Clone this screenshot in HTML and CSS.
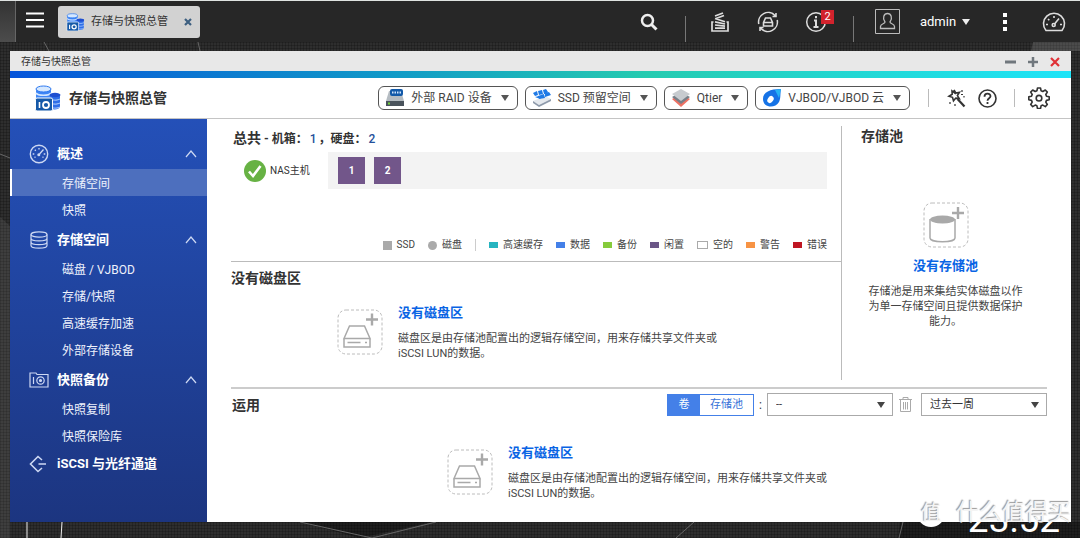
FILE: index.html
```html
<!DOCTYPE html>
<html lang="zh-CN">
<head>
<meta charset="utf-8">
<title>存储与快照总管</title>
<link rel="stylesheet" href="styles.css">
</head>
<body>
<svg class="defs" width="0" height="0" aria-hidden="true">
  <symbol id="app" viewBox="0 0 26 26">
    <path d="M1 4v10c0 2 14 2 15 0V4z" fill="#3f86f5"/>
    <ellipse cx="8.500" cy="4" rx="7.500" ry="3" fill="#d5e8ff" stroke="#2f7af0"/>
    <path d="M1 8c2 3 13 3 15 0" fill="none" stroke="#d5e8ff" stroke-width="1.500"/>
    <path d="M15 10v13c2 2 9 2 10-1V10z" fill="#2f6fe8"/>
    <ellipse cx="20" cy="10" rx="5.500" ry="2.200" fill="#1f4fd0"/>
    <path d="M16 14c3 2 7 1 9 0M16 18c3 2 7 1 9 0M16 22c3 2 7 1 9 0" fill="none" stroke="#b9d6ff"/>
    <rect x="0.500" y="13" width="17" height="13" rx="1.500" fill="#1559a8" stroke="#fff"/>
    <path d="M4.500 17v6" stroke="#fff" stroke-width="1.600"/>
    <circle cx="11" cy="20" r="3" fill="none" stroke="#fff" stroke-width="1.800"/>
  </symbol>
  <symbol id="gauge" viewBox="0 0 20 20">
    <circle cx="10" cy="10" r="8.700" fill="none" stroke="currentColor" stroke-width="1.400"/>
    <path d="M10 4v1.500M5.800 5.800l1 1M3.700 10h1.600M14.700 10h1.600M5.500 13.500l1-.6M14.500 13.500l-1-.6M14.500 5.500L10.500 10" fill="none" stroke="currentColor" stroke-width="1.300"/>
    <circle cx="9.800" cy="10.700" r="1.500" fill="currentColor"/>
  </symbol>
  <symbol id="volume" viewBox="0 0 46 46">
    <rect x="1" y="1" width="44" height="44" rx="8" fill="none" stroke="#bcbcbc" stroke-dasharray="3 2"/>
    <path d="M35 4.500v12M29 10.500h12" stroke="#a9a9a9" stroke-width="2.400"/>
    <path d="M7 29.500L12.500 17h15L33 29.500zM7 29.500v8.500h26v-8.500M10.500 33.500h13M28 33.500h2" fill="none" stroke="#a9a9a9" stroke-width="1.500"/>
  </symbol>
  <symbol id="up" viewBox="0 0 12 8">
    <path d="M1 7l5-6 5 6" fill="none" stroke="currentColor" stroke-width="1.200"/>
  </symbol>
</svg>

<header class="topbar">
  <div class="stub"></div>
  <button class="icon-btn menu-btn" aria-label="主菜单">
    <svg width="18" height="16" viewBox="0 0 18 16"><path d="M0 1.500h18M0 8h18M0 14.500h18" stroke="#fff" stroke-width="2"/></svg>
  </button>
  <div class="task">
    <svg width="19" height="18"><use href="#app"/></svg>
    <span>存储与快照总管</span>
    <button class="icon-btn task-close" aria-label="关闭">
      <svg width="8" height="8" viewBox="0 0 8 8"><path d="M1 1l6 6M7 1L1 7" stroke="#3d5f80" stroke-width="2.200"/></svg>
    </button>
  </div>
  <div class="tools">
    <button class="icon-btn slot slot-wide" aria-label="搜索">
      <svg width="18" height="18" viewBox="0 0 18 18" fill="none" stroke="#eee"><circle cx="7.500" cy="7.500" r="5.500" stroke-width="2.500"/><path d="M11.500 11.500l5 5" stroke-width="3"/></svg>
    </button>
    <span class="rule"></span>
    <button class="icon-btn slot" aria-label="后台任务">
      <svg width="20" height="20" viewBox="0 0 20 20" fill="none" stroke="#ddd" stroke-width="1.700"><path d="M3.500 10H2v9h16v-9h-1.500M5 16.200h10M5 13l10 1.200M5 9.800l10 2.200M5 6.500l10 3.300M5 4l8-3M6 6.500l8-3"/></svg>
    </button>
    <button class="icon-btn slot" aria-label="外部设备">
      <svg width="22" height="22" viewBox="0 0 22 22" fill="none" stroke="#ddd" stroke-width="1.600"><path d="M1.800 13A9.500 9.500 0 0 1 18 4.500M20.200 9A9.500 9.500 0 0 1 4 17.500M19 2v3.500h-3.500M3 20v-3.500h3.500"/><path d="M6.500 11.500L8.500 7h5l2 4.500V15h-9zM6.500 11.500h9"/></svg>
    </button>
    <button class="icon-btn slot" aria-label="通知">
      <svg width="22" height="22" viewBox="0 0 22 22" fill="none" stroke="#ddd"><circle cx="11" cy="11" r="9.300" stroke-width="1.500"/><path d="M11 5v2.200M9 9.500h2v6.500M8.500 16h5" stroke-width="2"/></svg>
      <span class="badge">2</span>
    </button>
    <span class="rule rule-user"></span>
    <button class="icon-btn slot slot-user" aria-label="用户">
      <svg width="25" height="25" viewBox="0 0 25 25" fill="none" stroke="#bbb"><path d="M.5.500h24v24H.5z"/><path d="M10 13C7 9 9 4.500 12.500 4.500S18 9 15 13c0 2 4.500 1.500 4.500 4.500v2h-14v-2c0-3 4.500-2.500 4.500-4.500z" stroke-width="1.300"/></svg>
    </button>
    <button class="icon-btn account">admin<span class="caret caret-light"></span></button>
    <button class="icon-btn slot slot-more" aria-label="更多">
      <svg width="4" height="18" viewBox="0 0 4 18" fill="#fff"><path d="M0 0h4v4H0zM0 7h4v4H0zM0 14h4v4H0z"/></svg>
    </button>
    <button class="icon-btn slot" aria-label="仪表板">
      <svg width="24" height="20" viewBox="0 0 24 20" fill="none" stroke="#ddd" stroke-width="1.600"><path d="M4 18.500A10.500 10.500 0 1 1 20 18.500z"/><path d="M12 4v2M6 7l1.300 1.300M4 12.500h2M18 12.500h2M17 6.500L12.500 12" /><circle cx="11.700" cy="13" r="1.500"/></svg>
    </button>
  </div>
</header>

<div class="desktop">
  <svg class="wallpaper" viewBox="0 0 1080 496" preserveAspectRatio="none" aria-hidden="true">
    <path d="M0 175l10 9v312H0z" fill="#fff" opacity=".08"/>
    <path d="M1033 0l-2 9h49V0z" fill="#fff" opacity=".14"/>
    <path d="M360 496l72-16H300zM900 480h180v16H898z" fill="#000" opacity=".35"/>
    <path d="M44 0l5 9M198 0l2 9M300 480l72 16 64-16M694 480l-18 16M903 480l-4 16M0 112l10 4" fill="none" stroke="#666"/>
    <path d="M27 480v16M62 480l-1 16" stroke="#eee"/>
  </svg>
  <div class="clock">23:52</div>

  <section class="window">
    <div class="titlebar">
      <span>存储与快照总管</span>
      <div class="win-btns">
        <button class="icon-btn" aria-label="最小化"><svg width="11" height="10" viewBox="0 0 11 10"><path d="M0 5h11" stroke="#70777d" stroke-width="3"/></svg></button>
        <button class="icon-btn" aria-label="最大化"><svg width="10" height="10" viewBox="0 0 10 10"><path d="M0 5h10M5 0v10" stroke="#70777d" stroke-width="2.500"/></svg></button>
        <button class="icon-btn" aria-label="关闭窗口"><svg width="10" height="10" viewBox="0 0 10 10"><path d="M1 1l8 8M9 1L1 9" stroke="#e03137" stroke-width="2.200"/></svg></button>
      </div>
    </div>
    <div class="stripe"></div>

    <div class="app-head">
      <svg width="26" height="26"><use href="#app"/></svg>
      <h1>存储与快照总管</h1>
      <div class="pills">
        <button class="pill">
          <svg width="20" height="18" viewBox="0 0 20 18"><path d="M4 2h12l3 10H1z" fill="#b5bcc2"/><path d="M1 12h18v5H1z" fill="#4a535c"/><path d="M3 14.500h2" stroke="#72d23a" stroke-width="2"/><rect x="5" y="0" width="13" height="7" rx="2" fill="#1259a8"/><path d="M7 3.500h9" stroke="#cfe5ff" stroke-width="2" stroke-dasharray="1.500 1"/></svg>
          外部 RAID 设备<span class="caret"></span>
        </button>
        <button class="pill">
          <svg width="20" height="18" viewBox="0 0 20 18"><path d="M1 12l12-5 6 3-12 6z" fill="#e5e9ee"/><path d="M1 12l6 4v2l-6-4zM7 16l12-6v2L7 18z" fill="#8e9aab"/><path d="M1 4l4-2 1 4-3 1zM6 2l4-1 1 4-4 1zM11 1l3-1 2 3-4 2zM6 7l6-2 1 4-6 1zM13 4l4-1 2 3-6 2zM3 8l4-1 1 3z" fill="#1f7ae6"/></svg>
          SSD 预留空间<span class="caret"></span>
        </button>
        <button class="pill">
          <svg width="20" height="18" viewBox="0 0 20 18"><path d="M1 10l9-5 9 5-9 8z" fill="#ee7264"/><path d="M1 8l9-5 9 5-9 7z" fill="#778089"/><path d="M1 5l9-5 9 5-9 7z" fill="#c7cbcf"/></svg>
          Qtier<span class="caret"></span>
        </button>
        <button class="pill">
          <svg width="20" height="18" viewBox="0 0 20 18"><path d="M1 10C1 3 8 0 19 0c-1 5 0 9-2 13-4 7-16 6-16-3z" fill="#1673e6"/><path d="M13 1l6-1-2 9z" fill="#26b4f5"/><ellipse cx="8.500" cy="10.500" rx="2.800" ry="3.800" fill="#fff" transform="rotate(35 8.500 10.500)"/></svg>
          VJBOD/VJBOD 云<span class="caret"></span>
        </button>
      </div>
      <span class="head-rule"></span>
      <div class="head-icons">
        <button class="icon-btn" aria-label="向导"><svg width="19" height="20" viewBox="0 0 19 20" fill="none" stroke="#333" stroke-width="1.600"><path d="M7 2l1.800 3 3.600-.6-2 3.200 1.900 3-3.500-.5-2.300 2.700-1-3.500L2 8.200l3.200-1.900-.2-3.400 2.500 2z"/><path d="M10.500 11l7 7.500" stroke-width="2.200"/><path d="M15 2v2M17 8v1.500M3 14v2M8 16v2M14 6.500h2" stroke-width="1.200"/></svg></button>
        <button class="icon-btn" aria-label="帮助"><svg width="19" height="19" viewBox="0 0 19 19" fill="none" stroke="#333"><circle cx="9.500" cy="9.500" r="8.500" stroke-width="1.600"/><path d="M6.500 7.700c0-4 6-3.800 6-.5 0 2-3 2-3 4.500M9.500 13v2" stroke-width="1.800"/></svg></button>
      </div>
      <span class="head-rule head-rule-end"></span>
      <button class="icon-btn" aria-label="设置"><svg width="22" height="22" viewBox="0 0 22 22" fill="none" stroke="#333" stroke-width="1.600" stroke-linejoin="round"><path d="M9.500 1h3l.6 2.800 1.700.7 2.500-1.500 2 2.100-1.500 2.400.7 1.700 2.700.6v3l-2.700.6-.7 1.700 1.500 2.400-2 2.100-2.500-1.500-1.700.7-.6 2.700h-3l-.6-2.700-1.700-.7-2.500 1.500-2-2.100 1.500-2.400-.7-1.700L.800 12.800v-3l2.700-.6.7-1.700L2.700 5.100l2-2.100 2.500 1.500 1.700-.7z"/><circle cx="11" cy="11.200" r="2.800"/></svg></button>
    </div>

    <div class="app-body">
      <nav class="sidebar">
        <button class="group"><svg width="20" height="20"><use href="#gauge"/></svg><span>概述</span><svg class="chev" width="12" height="8"><use href="#up"/></svg></button>
        <a class="item current" href="#overview">存储空间</a>
        <a class="item" href="#snap">快照</a>
        <button class="group"><svg width="20" height="18" viewBox="0 0 20 18" fill="none" stroke="currentColor" stroke-width="1.200"><ellipse cx="10" cy="3.500" rx="8" ry="2.700"/><path d="M2 3.500v11c0 3.500 16 3.500 16 0v-11M2 7.200c0 3.500 16 3.500 16 0M2 11c0 3.500 16 3.500 16 0"/></svg><span>存储空间</span><svg class="chev" width="12" height="8"><use href="#up"/></svg></button>
        <a class="item" href="#disk">磁盘 / VJBOD</a>
        <a class="item" href="#storage">存储/快照</a>
        <a class="item" href="#cache">高速缓存加速</a>
        <a class="item" href="#external">外部存储设备</a>
        <button class="group"><svg width="20" height="16" viewBox="0 0 20 16" fill="none" stroke="currentColor" stroke-width="1.200"><path d="M1 15V1h6l1 1.500h11V15zM4.500 5v7"/><circle cx="11.500" cy="8.500" r="3.700"/><circle cx="11.500" cy="8.500" r="1" fill="currentColor"/></svg><span>快照备份</span><svg class="chev" width="12" height="8"><use href="#up"/></svg></button>
        <a class="item" href="#replica">快照复制</a>
        <a class="item" href="#vault">快照保险库</a>
        <button class="group group-last"><svg width="20" height="18" viewBox="0 0 20 18" fill="none" stroke="currentColor" stroke-width="1.600"><path d="M13 5L9 1.500 1.500 9 9 16.500l4-3.500M9.500 9H17"/></svg><span>iSCSI 与光纤通道</span></button>
      </nav>

      <main class="content">
        <div class="overview">
          <div class="left-col">
            <section class="total">
              <h2>总共<small> - 机箱：<b>1</b>，硬盘：<b>2</b></small></h2>
              <div class="host">
                <div class="host-name">
                  <svg width="22" height="22" viewBox="0 0 22 22"><circle cx="11" cy="11" r="11" fill="#67b244"/><path d="M5 11.500l4 4.500 7.500-10" fill="none" stroke="#fff" stroke-width="2.600"/></svg>
                  <span>NAS主机</span>
                </div>
                <div class="bays"><button class="bay">1</button><button class="bay">2</button></div>
              </div>
              <ul class="legend">
                <li><i class="sw sw-ssd"></i>SSD</li>
                <li><i class="sw sw-hdd"></i>磁盘</li>
                <li class="legend-rule"></li>
                <li><i class="sw sw-cache"></i>高速缓存</li>
                <li><i class="sw sw-data"></i>数据</li>
                <li><i class="sw sw-spare"></i>备份</li>
                <li><i class="sw sw-free"></i>闲置</li>
                <li><i class="sw sw-empty"></i>空的</li>
                <li><i class="sw sw-warn"></i>警告</li>
                <li><i class="sw sw-error"></i>错误</li>
              </ul>
            </section>
            <section class="volumes">
              <h2>没有磁盘区</h2>
              <div class="empty">
                <svg width="46" height="46"><use href="#volume"/></svg>
                <div><a href="#new-volume">没有磁盘区</a><p>磁盘区是由存储池配置出的逻辑存储空间，用来存储共享文件夹或<br>iSCSI LUN的数据。</p></div>
              </div>
            </section>
          </div>
          <section class="pool">
            <h2>存储池</h2>
            <div class="pool-empty">
              <svg width="46" height="46" viewBox="0 0 46 46"><rect x="1" y="1" width="44" height="44" rx="8" fill="none" stroke="#bcbcbc" stroke-dasharray="3 2"/><path d="M35 5v12M29 11h12" stroke="#a9a9a9" stroke-width="2.400"/><path d="M7 17v19c0 5 25 5 25 0V17" fill="#fff" stroke="#a9a9a9" stroke-width="1.500"/><ellipse cx="19.500" cy="17.500" rx="12.500" ry="4" fill="#a9a9a9"/></svg>
              <a href="#new-pool">没有存储池</a>
              <p>存储池是用来集结实体磁盘以作为单一存储空间且提供数据保护能力。</p>
            </div>
          </section>
        </div>

        <section class="usage">
          <div class="usage-head">
            <h2>运用</h2>
            <div class="segmented"><button class="on">卷</button><button>存储池</button></div>
            <span class="colon">:</span>
            <span class="select"><select aria-label="卷"><option>--</option></select></span>
            <button class="icon-btn trash" aria-label="删除"><svg width="13" height="15" viewBox="0 0 13 15" fill="none" stroke="#aaa"><path d="M0 2.500h13M4 2.500v-2h5v2M1.500 2.500v12h10v-12M4.500 5v7.500M6.500 5v7.500M8.500 5v7.500"/></svg></button>
            <span class="select"><select aria-label="时间范围"><option>过去一周</option></select></span>
          </div>
          <div class="empty">
            <svg width="46" height="46"><use href="#volume"/></svg>
            <div><a href="#new-volume">没有磁盘区</a><p>磁盘区是由存储池配置出的逻辑存储空间，用来存储共享文件夹或<br>iSCSI LUN的数据。</p></div>
          </div>
        </section>
      </main>
    </div>
  </section>
</div>

<div class="watermark"><span class="seal">值</span>什么值得买</div>
</body>
</html>
```

FILE: styles.css
```css
* { box-sizing: border-box; }

body {
  margin: 0;
  min-height: 100vh;
  display: flex;
  flex-direction: column;
  position: relative;
  overflow: hidden;
  border-top: 1px solid #dfe3e1;
  background-color: #2e2e2e;
  background-image:
    repeating-linear-gradient(0deg, #0003 0 1px, #0000 1px 3px),
    repeating-linear-gradient(90deg, #0003 0 1px, #0000 1px 3px);
  color: #333;
  font: 12px/16px Roboto, "Noto Sans CJK SC", sans-serif;
}

button, select { font: inherit; color: inherit; }
button { cursor: pointer; }
h1, h2, p, ul { margin: 0; padding: 0; }
svg { display: block; flex: none; }
.defs { position: absolute; }

.icon-btn {
  display: flex;
  align-items: center;
  justify-content: center;
  padding: 0;
  border: 0;
  background: none;
}

.caret {
  border: 4px solid transparent;
  border-top: 6px solid #555;
  border-bottom: 0;
}
.caret-light { border-top-color: #eee; }

/* System bar */
.topbar {
  display: flex;
  align-items: center;
  height: 41px;
  background: #272727;
}
.stub {
  align-self: stretch;
  width: 16px;
  border-right: 1px solid #666;
  background: linear-gradient(#333, #4c4c4c);
}
.menu-btn { width: 38px; height: 32px; padding-bottom: 4px; }
.task {
  display: flex;
  align-items: center;
  gap: 6px;
  width: 142px;
  height: 32px;
  margin-left: 4px;
  padding: 0 8px;
  border-radius: 3px;
  background: #d2d2d2;
  font-size: 11px;
}
.task-close { margin-left: auto; }
.tools { display: flex; align-items: center; margin-left: auto; padding-right: 2px; }
.slot { position: relative; width: 48px; height: 40px; }
.slot-wide { width: 72px; }
.slot-user { width: 46px; }
.slot-more { width: 50px; }
.rule { align-self: flex-end; width: 1px; height: 26px; margin-right: 10px; background: #777; }
.rule-user { margin-left: 13px; }
.account { width: 70px; gap: 6px; color: #fff; font-size: 13px; }
.badge {
  position: absolute;
  top: 8px;
  right: 6px;
  width: 13px;
  background: #d2232d;
  color: #fff;
  font-size: 11px;
  line-height: 14px;
  text-align: center;
}

/* Desktop */
.desktop {
  flex: 1;
  display: flex;
  position: relative;
  padding: 9px 9px 16px 10px;
}
.wallpaper { position: absolute; inset: 0; width: 100%; height: 100%; }
.clock {
  position: absolute;
  right: 20px;
  bottom: 0;
  color: #fff;
  font-size: 37px;
  line-height: 36px;
}

/* Window */
.window {
  position: relative;
  flex: 1;
  display: flex;
  flex-direction: column;
  background: #fff;
}
.titlebar {
  display: flex;
  align-items: center;
  justify-content: space-between;
  height: 20px;
  padding: 2px 11px 0;
  background: #e8e8e8;
  font-size: 10px;
}
.win-btns { display: flex; gap: 12px; }
.stripe { height: 7px; background: linear-gradient(90deg, #0654da, #1098c8 35%, #26cbb0 60%, #1ee4f8); }

.app-head {
  display: flex;
  align-items: center;
  height: 41px;
  padding: 0 21px 0 25px;
  border-bottom: 1px solid #c4c4c4;
}
h1 { margin-left: 8px; font-size: 14px; font-weight: 700; line-height: 20px; }
.pills { display: flex; gap: 7px; margin-left: auto; }
.pill {
  display: flex;
  align-items: center;
  gap: 6px;
  height: 24px;
  padding: 0 8px 0 6px;
  border: 1px solid #555;
  border-radius: 6px;
  background: #fff;
  color: #444;
}
.pill .caret { margin-left: 3px; }
.head-rule { width: 1px; height: 18px; margin: 0 18px; background: #bbb; }
.head-rule-end { margin: 0 13px 0 17px; }
.head-icons { display: flex; gap: 12px; }

.app-body { flex: 1; display: flex; }

/* Navigation */
.sidebar {
  display: flex;
  flex-direction: column;
  width: 197px;
  padding-top: 18px;
  background: linear-gradient(#2450b8, #1c3580);
  color: #fff;
}
.group {
  display: flex;
  align-items: center;
  gap: 8px;
  height: 32px;
  padding: 2px 10px 0 19px;
  border: 0;
  background: none;
  font-size: 13px;
  font-weight: 700;
}
.group svg { color: #cdd8f3; }
.group-last { height: 27px; }
.chev { margin-left: auto; }
.item {
  height: 27px;
  padding: 2px 0 0 52px;
  color: #eef2fc;
  line-height: 27px;
  text-decoration: none;
}
.current { padding-left: 50px; border-left: 2px solid #fff; background: #4d6fbe; }

/* Content */
.content { flex: 1; padding: 7px 24px 0; }
h2 { font-size: 14px; font-weight: 700; line-height: 20px; }
.overview { display: grid; grid-template-columns: 1fr 205px; }
.left-col { border-right: 1px solid #bbb; }
.total { height: 136px; border-bottom: 1px solid #bbb; padding: 2px 14px 0 2px; display: flex; flex-direction: column; }
h2 small { font-size: 12px; }
h2 b { margin: 0 2px; color: #24509a; font-weight: 500; }
.host { display: flex; margin-top: 3px; }
.host-name {
  display: flex;
  align-items: center;
  gap: 4px;
  width: 95px;
  padding-left: 11px;
  font-size: 10px;
}
.bays { flex: 1; display: flex; gap: 9px; padding: 5px 10px; background: #f3f3f3; }
.bay {
  width: 27px;
  height: 27px;
  padding: 0;
  border: 0;
  background: #72568a;
  color: #fff;
  font-size: 10px;
  font-weight: 700;
}
.legend {
  display: flex;
  align-items: center;
  justify-content: flex-end;
  gap: 13px;
  margin: auto 0 8px;
  color: #444;
  list-style: none;
  font-size: 10px;
}
.legend li { display: flex; align-items: center; gap: 5px; }
.legend .legend-rule { width: 1px; height: 12px; background: #ccc; }
.sw { width: 9px; height: 6px; }
.sw-ssd { height: 9px; background: #aaa; }
.sw-hdd { height: 9px; border-radius: 50%; background: #aaa; }
.sw-cache { background: #27b4c0; }
.sw-data { background: #4480e8; }
.sw-spare { background: #86cb3c; }
.sw-free { background: #6b5687; }
.sw-empty { width: 11px; height: 8px; border: 1px solid #aaa; }
.sw-warn { background: #f79344; }
.sw-error { background: #bf1622; }

.volumes { height: 118px; padding-top: 6px; }
.empty { display: flex; align-items: center; justify-content: center; gap: 15px; }
.volumes .empty { margin-top: 15px; padding-right: 18px; }
.empty a, .pool-empty a {
  display: block;
  color: #0964e4;
  font-size: 13px;
  font-weight: 700;
  line-height: 20px;
  text-decoration: none;
}
.empty p, .pool-empty p { color: #444; font-size: 11px; line-height: 15px; }
.empty p { margin-top: 8px; }

.pool h2 { padding-left: 19px; }
.pool-empty { display: flex; flex-direction: column; align-items: center; margin-top: 56px; padding-left: 2px; }
.pool-empty a { margin-top: 8px; }
.pool-empty p { width: 158px; margin-top: 8px; text-align: center; }

.usage { margin-top: 7px; border-top: 2px solid #ccc; padding-top: 4px; }
.usage-head { display: flex; align-items: center; padding-left: 1px; }
.segmented { display: flex; margin-left: auto; border: 1px solid #4480e8; }
.segmented button {
  width: 53px;
  height: 20px;
  padding: 0;
  border: 0;
  background: #fff;
  color: #3672d8;
  font-size: 11px;
}
.segmented .on { width: 32px; background: #4480e8; color: #fff; }
.colon { width: 13px; text-align: center; }
.select { display: grid; align-items: center; width: 126px; font-size: 11px; }
.select select {
  grid-area: 1 / 1;
  width: 100%;
  height: 23px;
  padding: 0 8px;
  border: 1px solid #aaa;
  border-radius: 0;
  appearance: none;
  background: #fff;
}
.select::after {
  content: "";
  grid-area: 1 / 1;
  justify-self: end;
  margin-right: 8px;
  border: 4px solid transparent;
  border-top: 6px solid #444;
  border-bottom: 0;
  pointer-events: none;
}
.trash { width: 28px; padding-right: 4px; }
.usage .empty { margin-top: 27px; padding-right: 4px; }

.watermark {
  position: absolute;
  right: 9px;
  bottom: 11px;
  display: flex;
  align-items: center;
  gap: 11px;
  color: #f4f4f4;
  font-size: 23px;
  line-height: 28px;
  text-shadow: -1px -1px 1px #999;
  pointer-events: none;
}
.seal {
  width: 28px;
  border-radius: 50%;
  background: #fff;
  font-size: 20px;
  text-align: center;
}
```
